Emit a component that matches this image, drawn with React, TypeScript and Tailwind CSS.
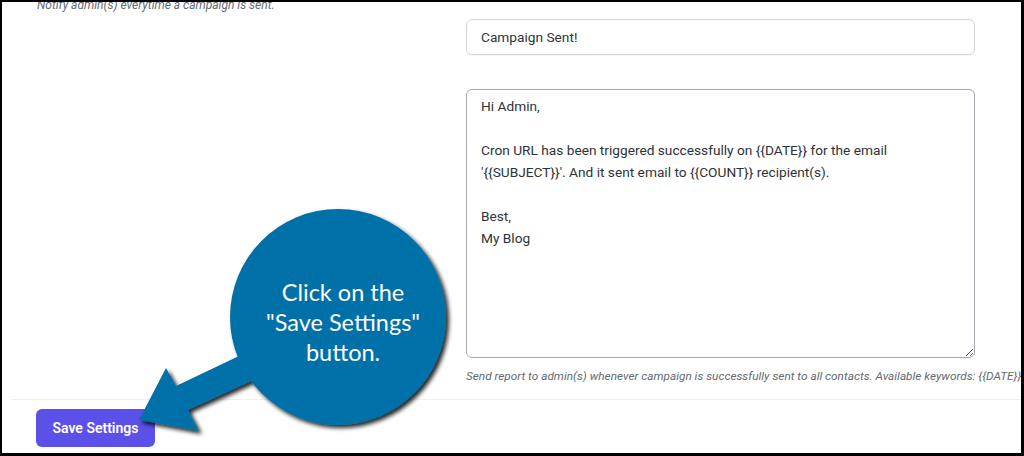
import React from "react";

const body = "font-['Roboto','Noto_Sans',sans-serif]";

export default function App() {
  const message =
    "Hi Admin,\n\nCron URL has been triggered successfully on {{DATE}} for the email\n'{{SUBJECT}}'. And it sent email to {{COUNT}} recipient(s).\n\nBest,\nMy Blog";
  return (
    <div className="relative w-[1024px] h-[456px] bg-black pt-[2px] pl-[2px] pr-[3px] pb-[3px]">
      <div className={`relative w-full h-full bg-white overflow-hidden flex flex-col ${body}`}>
        <div className="grid grid-cols-[464px_509px]">
          <div className="pl-[35px] -mt-[5px]">
            <p className="text-[12px] leading-[16px] italic text-[#646970]">
              Notify admin(s) everytime a campaign is sent.
            </p>
          </div>
          <div className="pt-[17px] flex flex-col">
            <div className="h-[36px] rounded-[6px] border border-[#d4d5da] shadow-[0_1px_1px_rgba(0,0,0,0.04)] px-[14px] flex items-center text-[13.7px] text-[#2c3338]">
              Campaign Sent!
            </div>
            <textarea
              readOnly
              defaultValue={message}
              className="mt-[34px] h-[269px] w-full rounded-[6px] border border-[#a7aab1] px-[14px] py-[5px] text-[13.7px] leading-[22px] text-[#2c3338] outline-none resize-y overflow-hidden"
            />
            <p className="mt-[10px] whitespace-nowrap text-[11.8px] leading-[16px] italic text-[#646970]">
              Send report to admin(s) whenever campaign is successfully sent to all contacts. Available keywords: {"{{DATE}}"}, {"{{SUBJECT}}"}, {"{{COUNT}}"}
            </p>
          </div>
        </div>
        <div className="mt-[15px] ml-[9px] h-px bg-[#f0f0f1]" />
        <div className="pl-[34px] pt-[9px]">
          <button className="h-[38px] w-[119px] rounded-[6px] bg-[#5b50e8] text-white text-[14px] font-semibold">
            Save Settings
          </button>
        </div>
      </div>

      {/* Callout overlay */}
      <svg
        className="absolute left-0 top-0 pointer-events-none"
        width="1024"
        height="456"
        viewBox="0 0 1024 456"
      >
        <defs>
          <filter id="sh" x="-20%" y="-20%" width="140%" height="140%">
            <feDropShadow dx="3" dy="3" stdDeviation="2" floodColor="#000" floodOpacity="0.85" />
          </filter>
        </defs>
        <g filter="url(#sh)" fill="#0071a8">
          <circle cx="338" cy="317" r="108" />
          <polygon points="139,420 166,368 176,386 262,345 275,370 188,410 199,431" />
        </g>
      </svg>
      <div className="absolute left-[243px] top-[277px] w-[200px] text-center text-white text-[23.5px] leading-[30px] font-['Lato',sans-serif] pointer-events-none">
        <div>Click on the</div>
        <div>"Save Settings"</div>
        <div>button.</div>
      </div>
    </div>
  );
}
